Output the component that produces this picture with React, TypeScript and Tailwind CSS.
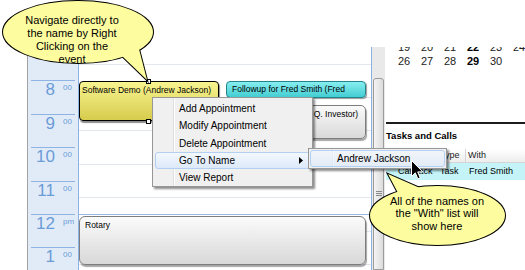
import React from 'react';

const HOURS = [
  { h: '', m: '' },
  { h: '8', m: '00' },
  { h: '9', m: '00' },
  { h: '10', m: '00' },
  { h: '11', m: '00' },
  { h: '12', m: 'pm' },
  { h: '1', m: '00' },
];

const MENU = ['Add Appointment', 'Modify Appointment', 'Delete Appointment', 'Go To Name', 'View Report'];

const WEEKS = [
  ['19', '20', '21', '22', '23', '24'],
  ['26', '27', '28', '29', '30', ''],
];

function TimeColumn() {
  return (
    <div className="w-[52px] shrink-0 border-l border-r border-l-[#a3a3a3] border-r-[#8db1e2] bg-[#e1ebf8]">
      {HOURS.map((r, i) => (
        <div key={i} className="h-[33.4px]">
          <div className={`mx-[3px] h-px ${i === 0 ? 'bg-transparent' : 'bg-[#8fb3e2]'}`} />
          {r.h && (
            <div className="flex text-[#6b9cd7]">
              <span className="w-[27px] text-right text-[17px] leading-none">{r.h}</span>
              <span className="ml-[8px] mt-[3px] text-[8px] leading-none">{r.m}</span>
            </div>
          )}
        </div>
      ))}
    </div>
  );
}

function DayColumn() {
  return (
    <div className="relative w-[293px] shrink-0 border-r border-[#8db1e2] text-[8.5px] leading-[11px]">
      {HOURS.map((r, i) => (
        <div key={i} className={`h-[33.4px] border-t ${r.h === '12' ? 'border-[#9db8de]' : 'border-transparent'}`}>
          <div className="h-[15.7px]" />
          <div className="border-t border-[#e2e7ee]" />
        </div>
      ))}

      {/* appointments */}
      <div className="absolute left-0 top-[34px] w-[140px] h-[40px] overflow-hidden whitespace-nowrap rounded-[4px] border border-black bg-gradient-to-b from-[#f8f48f] to-[#d6cc4c] px-[2px] pt-[3px] shadow-[1px_2px_1px_rgba(0,0,0,0.45)]">
        Software Demo (Andrew Jackson)
      </div>
      <div className="absolute left-[67px] top-[32px] w-[5px] h-[5px] border border-black bg-white" />
      <div className="absolute left-[67px] top-[72px] w-[5px] h-[5px] border border-black bg-white" />
      <div className="absolute left-[147px] top-[34px] w-[140px] h-[17px] overflow-hidden whitespace-nowrap rounded-[4px] border border-[#23858b] bg-gradient-to-b from-[#86eef0] to-[#3fcdd2] px-[5px] pt-[2px] shadow-[1px_1px_1px_rgba(0,0,0,0.4)]">
        Followup for Fred Smith (Fred
      </div>
      <div className="absolute left-[147px] top-[58px] w-[140px] h-[34px] overflow-hidden whitespace-nowrap rounded-[5px] border border-[#7d7d7d] bg-gradient-to-b from-[#fafafa] to-[#d9d9d9] px-[5px] pt-[3px] shadow-[1px_2px_1px_rgba(0,0,0,0.35)]">
        Lunch Meeting (John Q. Investor)
      </div>
      <div className="absolute left-0 top-[169px] w-[287px] h-[49px] rounded-[6px] border border-[#7d7d7d] bg-gradient-to-b from-[#fbfbfb] to-[#d8d8d8] px-[5px] pt-[3px] shadow-[1px_2px_1px_rgba(0,0,0,0.35)]">
        Rotary
      </div>
    </div>
  );
}

function ScrollBar() {
  return (
    <div className="flex w-[13px] shrink-0 flex-col bg-[#e9e9e9] pt-[31px]">
      <div className="mx-[1px] flex-1 rounded-t-[3px] border border-[#9b9b9b] bg-gradient-to-r from-[#f4f4f4] to-[#dcdcdc] pt-[112px]">
        <div className="mx-auto flex w-[6px] flex-col gap-[1px]">
          <div className="h-px bg-[#8a8a8a]" />
          <div className="h-px bg-[#8a8a8a]" />
          <div className="h-px bg-[#8a8a8a]" />
        </div>
      </div>
    </div>
  );
}

function RightPanel() {
  return (
    <div className="flex-1 pl-[1px]">
      <div className="h-[75px] overflow-hidden">
        <div className="-mt-[7px] pl-[6.5px] text-[11px] leading-[14px] text-[#222]">
          {WEEKS.map((w, i) => (
            <div key={i} className="flex">
              {w.map((d, j) => (
                <span key={j} className={`w-[23px] text-center ${d === '22' || d === '29' ? 'font-bold text-black' : ''}`}>
                  {d}
                </span>
              ))}
            </div>
          ))}
        </div>
      </div>
      <div className="h-[2px] bg-[#1c1c1c]" />
      <div className="mt-[6.4px] text-[9.5px] font-bold leading-[12px]">Tasks and Calls</div>
      <div className="mt-[6.6px] text-[9px]">
        <div className="flex h-[14px] items-center border-b border-[#d5d5d5] bg-gradient-to-b from-white to-[#ededed] text-[#222]">
          <span className="w-[52px] border-r border-[#d5d5d5] pl-[2px]">Subject</span>
          <span className="w-[28px] border-r border-[#d5d5d5] pl-[2px]">Type</span>
          <span className="pl-[2px]">With</span>
        </div>
        <div className="flex h-[17px] items-center bg-[#c4f4f8]">
          <span className="w-[52px] pl-[12px]">Callback</span>
          <span className="w-[28px] pl-[2px]">Task</span>
          <span className="pl-[3px]">Fred Smith</span>
        </div>
      </div>
    </div>
  );
}

function ContextMenu() {
  return (
    <>
      <div className="absolute left-[152px] top-[97px] w-[161px] h-[90px] border border-[#979797] bg-[linear-gradient(to_right,#f0f0f0_20px,#dedfe0_20px,#dedfe0_21px,#ffffff_21px,#ffffff_22px,#f0f0f0_22px)] pt-[2px] text-[10px] shadow-[2px_2px_2px_rgba(0,0,0,0.45)]">
        {MENU.map((m) => (
          <div
            key={m}
            className={`mx-[2px] flex h-[17.3px] items-center rounded-[3px] border pl-[23px] pr-[6px] ${
              m === 'Go To Name'
                ? 'border-[#b3d0f3] bg-gradient-to-b from-[#f3f8fe] to-[#dde9f9]'
                : 'border-transparent'
            }`}
          >
            <span>{m}</span>
            {m === 'Go To Name' && (
              <svg className="ml-auto" width="4" height="7" viewBox="0 0 4 7">
                <polygon points="0,0 4,3.5 0,7" fill="#000" />
              </svg>
            )}
          </div>
        ))}
      </div>
      <div className="absolute left-[308px] top-[148px] w-[139px] h-[21px] border border-[#979797] bg-[linear-gradient(to_right,#f0f0f0_23px,#dedfe0_23px,#dedfe0_24px,#ffffff_24px,#ffffff_25px,#f0f0f0_25px)] pt-px text-[10px] shadow-[2px_2px_2px_rgba(0,0,0,0.45)]">
        <div className="mx-[1px] flex h-[17px] items-center rounded-[3px] border border-[#b3d0f3] bg-gradient-to-b from-[#f3f8fe]/70 to-[#dde9f9]/70 pl-[26px]">
          Andrew Jackson
        </div>
      </div>
    </>
  );
}

function Cursor() {
  return (
    <svg className="absolute left-[411px] top-[160px]" width="13" height="21" viewBox="0 0 13 21">
      <path
        d="M0.5 0.5 L0.5 16.5 L4.3 12.8 L6.8 18.8 L9.2 17.8 L6.7 11.9 L11.8 11.9 Z"
        fill="#000"
        stroke="#fff"
        strokeWidth="1"
        strokeLinejoin="miter"
      />
    </svg>
  );
}

function Callouts() {
  return (
    <>
      <svg className="absolute left-0 top-0" width="525" height="270" viewBox="0 0 525 270">
        <g stroke="#000" strokeWidth="2" fill="#fdfd9f">
          <ellipse cx="78" cy="32" rx="75" ry="31" />
          <polygon points="122,56 147,80 139,49" />
          <ellipse cx="437.5" cy="215.5" rx="67.5" ry="29.5" />
          <polygon points="398,193 388,174 420,188" />
        </g>
        <g fill="#fdfd9f">
          <ellipse cx="78" cy="32" rx="75" ry="31" />
          <polygon points="122,56 147,80 139,49" />
          <ellipse cx="437.5" cy="215.5" rx="67.5" ry="29.5" />
          <polygon points="398,193 388,174 420,188" />
        </g>
      </svg>
      <div className="absolute left-0 top-[13.5px] w-[144px] text-center text-[11px] leading-[13px]">
        Navigate directly to
        <br />
        the name by Right
        <br />
        Clicking on the
        <br />
        event
      </div>
      <div className="absolute left-[387px] top-[194.75px] w-[100px] text-center text-[11px] leading-[12.5px]">
        All of the names on
        <br />
        the "With" list will
        <br />
        show here
      </div>
    </>
  );
}

export default function App() {
  return (
    <div className="relative h-[270px] w-[525px] overflow-hidden bg-white font-['Liberation_Sans',Arial,sans-serif] text-black">
      <div className="h-[47px]" />
      <div className="flex h-[223px] overflow-hidden">
        <div className="w-[27px] shrink-0" />
        <TimeColumn />
        <DayColumn />
        <ScrollBar />
        <RightPanel />
      </div>
      <ContextMenu />
      <Cursor />
      <Callouts />
    </div>
  );
}
